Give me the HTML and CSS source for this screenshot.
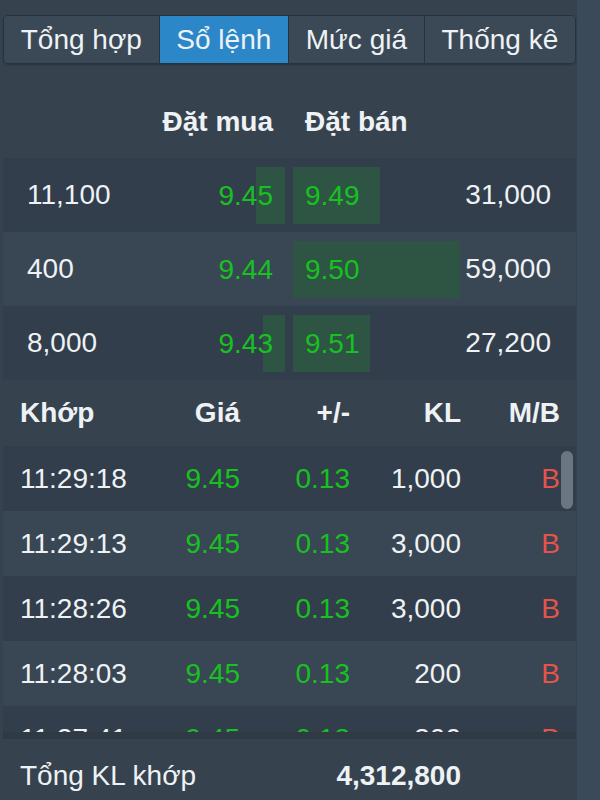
FILE: index.html
```html
<!DOCTYPE html>
<html lang="vi">
<head>
  <meta charset="UTF-8">
  <title>Sổ lệnh</title>
  <link rel="stylesheet" href="styles.css">
</head>
<body>
  <div class="panel">

    <!-- tabs -->
    <div class="tabs">
      <div class="tab">Tổng hợp</div>
      <div class="tab active">Sổ lệnh</div>
      <div class="tab">Mức giá</div>
      <div class="tab">Thống kê</div>
    </div>

    <!-- order book -->
    <div class="book-head">
      <div class="vol"></div>
      <div class="buy">Đặt mua</div>
      <div class="sell">Đặt bán</div>
      <div class="vol"></div>
    </div>
    <div class="book">
      <div class="book-row dark">
        <div class="vol">11,100</div>
        <div class="buy up"><span class="bar" style="width: 29px"></span><span class="px">9.45</span></div>
        <div class="sell up"><span class="bar" style="width: 87px"></span><span class="px">9.49</span></div>
        <div class="vol right">31,000</div>
      </div>
      <div class="book-row">
        <div class="vol">400</div>
        <div class="buy up"><span class="px">9.44</span></div>
        <div class="sell up"><span class="bar" style="width: 167px"></span><span class="px">9.50</span></div>
        <div class="vol right">59,000</div>
      </div>
      <div class="book-row dark">
        <div class="vol">8,000</div>
        <div class="buy up"><span class="bar" style="width: 22px"></span><span class="px">9.43</span></div>
        <div class="sell up"><span class="bar" style="width: 77px"></span><span class="px">9.51</span></div>
        <div class="vol right">27,200</div>
      </div>
    </div>

    <!-- matched trades -->
    <div class="trade-head">
      <div>Khớp</div>
      <div class="r">Giá</div>
      <div class="r">+/-</div>
      <div class="r">KL</div>
      <div class="r">M/B</div>
    </div>
    <div class="trades">
      <div class="trade dark">
        <div>11:29:18</div><div class="r up">9.45</div><div class="r up">0.13</div><div class="r">1,000</div><div class="r side">B</div>
      </div>
      <div class="trade">
        <div>11:29:13</div><div class="r up">9.45</div><div class="r up">0.13</div><div class="r">3,000</div><div class="r side">B</div>
      </div>
      <div class="trade dark">
        <div>11:28:26</div><div class="r up">9.45</div><div class="r up">0.13</div><div class="r">3,000</div><div class="r side">B</div>
      </div>
      <div class="trade">
        <div>11:28:03</div><div class="r up">9.45</div><div class="r up">0.13</div><div class="r">200</div><div class="r side">B</div>
      </div>
      <div class="trade dark">
        <div>11:27:41</div><div class="r up">9.45</div><div class="r up">0.13</div><div class="r">300</div><div class="r side">B</div>
      </div>
      <div class="scrollbar"></div>
    </div>

    <div class="total">
      <div class="label">Tổng KL khớp</div>
      <div class="sum">4,312,800</div>
    </div>

  </div>
</body>
</html>
```

FILE: styles.css
```css
body {
  margin: 0;
  background: #3b4a58;
  font-family: "Liberation Sans", Arial, sans-serif;
  font-size: 28px;
  color: #eef2f5;
  overflow: hidden;
}
.panel {
  width: 577px;
  height: 800px;
  background: #36434f;
  padding-top: 15px;
  box-sizing: border-box;
  overflow: hidden;
}

/* tabs */
.tabs {
  display: flex;
  margin: 0 1px 0 3px;
  height: 47px;
  border: 1px solid #28323d;
  border-radius: 5px;
  overflow: hidden;
  box-shadow: 0 1px 2px rgba(0, 0, 0, 0.25);
}
.tab {
  flex: 1 1 auto;
  display: flex;
  align-items: center;
  justify-content: center;
  padding: 0 15px;
  background: #3b4957;
  border-left: 1px solid #28323d;
  white-space: nowrap;
}
.tab:first-child { border-left: none; }
.tab.active { background: #2b87c8; }

/* order book */
.book-head, .book-row {
  display: flex;
  align-items: center;
  margin: 0 1px 0 3px;
  padding: 0 25px 0 24px;
}
.book-head {
  font-weight: bold;
  padding-top: 22px;
  height: 72px;
}
.vol { flex: 1; }
.vol.right { text-align: right; }
.buy, .sell {
  width: 150px;
  position: relative;
}
.buy { text-align: right; padding-right: 12px; margin-right: 8px; box-sizing: border-box; }
.sell { padding-left: 12px; box-sizing: border-box; }
.book-row { height: 74px; background: #394653; }
.book-row .buy, .book-row .sell {
  height: 57px;
  line-height: 57px;
}
.dark { background: #323e4b !important; }
.bar {
  position: absolute;
  top: 0;
  bottom: 0;
  background: #2e5443;
}
.buy .bar { right: 0; }
.sell .bar { left: 0; }
.px { position: relative; }
.up { color: #17c11f; }

/* trades */
.trade-head, .trade, .total {
  display: grid;
  grid-template-columns: 130px 90px 110px 111px 99px;
  align-items: center;
  margin: 0 1px 0 3px;
  padding: 0 16px 0 17px;
}
.trade-head { height: 66px; font-weight: bold; }
.r { text-align: right; }
.trades {
  position: relative;
  height: 286px;
  overflow: hidden;
  margin: 0 1px 0 3px;
  border-bottom: 7px solid #2f3a45;
}
.trade {
  height: 65px;
  margin: 0;
  background: #394653;
}
.side { color: #e5534b; }
.scrollbar {
  position: absolute;
  right: 3px;
  top: 5px;
  width: 12px;
  height: 58px;
  border-radius: 6px;
  background: #6a7682;
}

/* footer */
.total { height: 62px; padding-top: 6px; }
.label { grid-column: 1 / 3; }
.sum { grid-column: 3 / 5; text-align: right; font-weight: bold; }
```
